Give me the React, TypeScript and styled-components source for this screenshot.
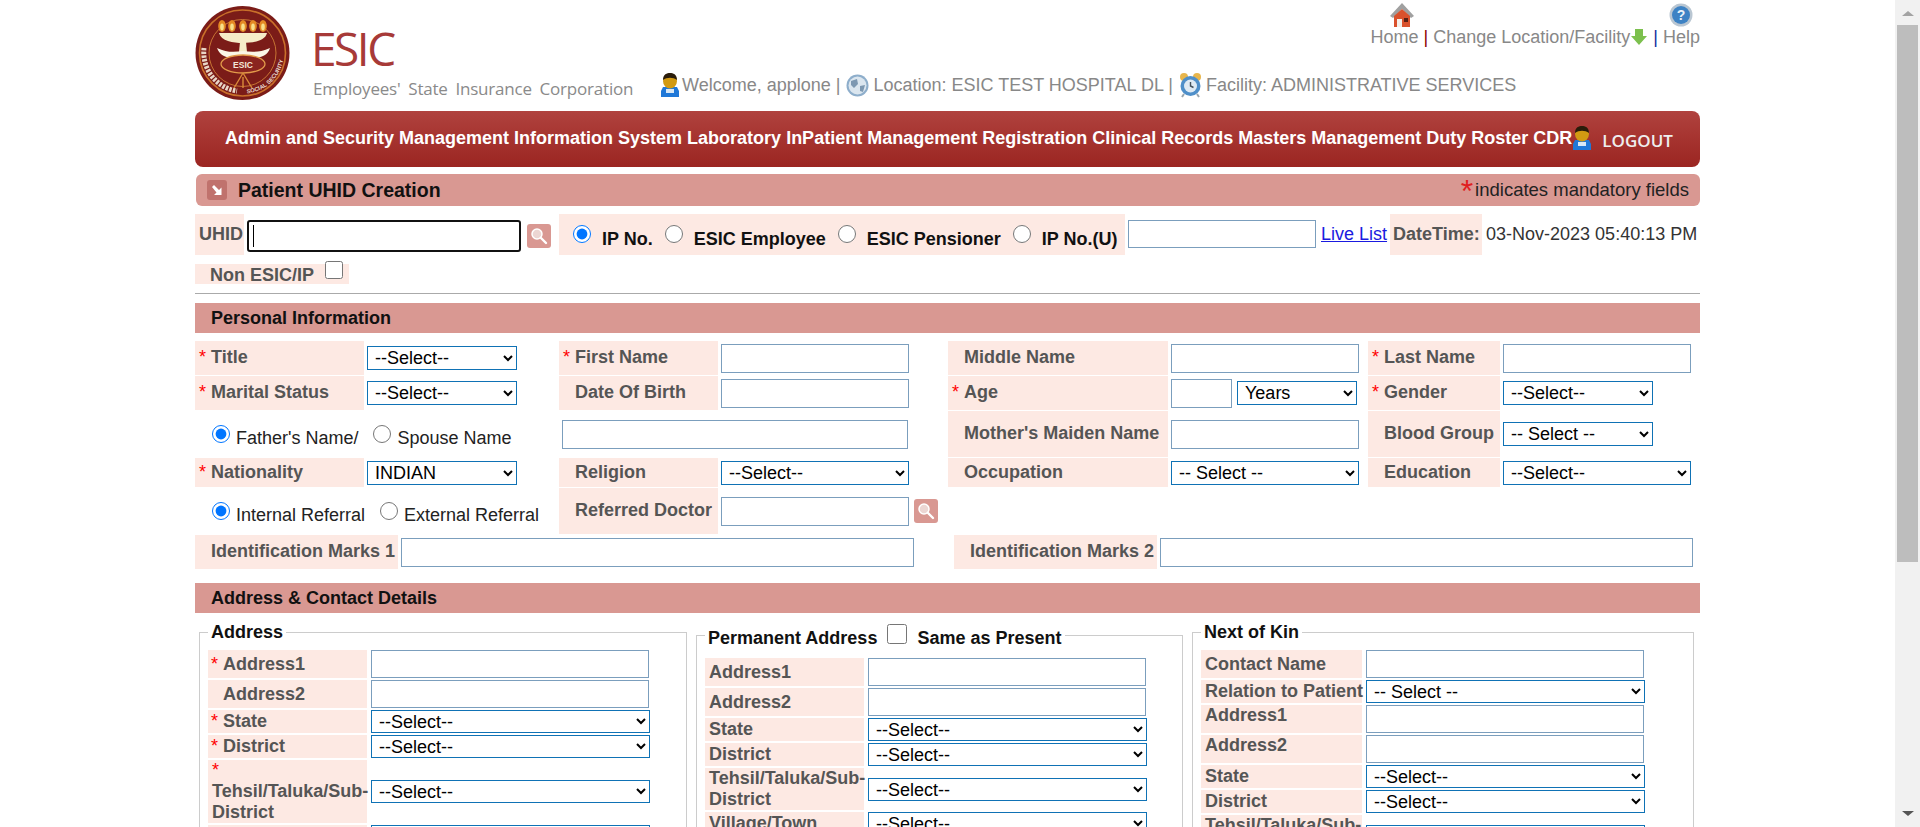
import React, {FC, ReactNode} from 'react';

import styled, {createGlobalStyle} from 'styled-components';

const GlobalStyle = createGlobalStyle`
    html, body {
        margin: 0;
        height: 100%;
        overflow: hidden;
        background: #fff;
    }

    body {
        font-family: "Liberation Sans", Arial, sans-serif;
        font-size: 18px;
    }
`;

const LogoIcon = () => (
    <svg width='95' height='94' viewBox='0 0 95 94'>
        <defs>
            <path id='logoSeal' d='M 50 87.5 A 40.5 40.5 0 0 0 85 30'/>
        </defs>
        <circle cx='47.5' cy='47' r='47' fill='#7b1c18'/>
        <circle cx='47.5' cy='47' r='43' fill='none' stroke='#c9702a' strokeWidth='1.6'/>
        <circle cx='47.5' cy='47' r='33.5' fill='none' stroke='#d98a3a' strokeWidth='0.8'/>
        <path d='M 9 42 A 39 39 0 0 0 42 85' fill='none' stroke='#e8d6c6' strokeWidth='5' strokeDasharray='2.5 1.2'/>
        <text fontFamily='Liberation Sans' fontSize='5.8' fontWeight='700' fill='#eadbcf'>
            <textPath href='#logoSeal' startOffset='2'>{'SOCIAL SECURITY'}</textPath>
        </text>
        {[27, 37, 48, 58, 68].map((x) => (
            <g key={x}>
                <ellipse cx={x} cy='20' rx='3.8' ry='6' fill='#e58a24'/>
                <ellipse cx={x} cy='21' rx='1.8' ry='3.4' fill='#f8e08a'/>
            </g>
        ))}
        <path d='M 24 27 H 72 C 70 35 58 37 48 37 C 38 37 26 35 24 27 Z' fill='#f5ecc8'/>
        <path d='M 45 36 H 51 L 52 46 H 44 Z' fill='#f5ecc8'/>
        <path d='M 22 42 C 32 47 40 46 48 45 C 56 46 64 47 75 42 C 72 52 60 54 48 50 C 36 54 26 52 22 42 Z' fill='#fbf6e6'/>
        <ellipse cx='48' cy='58' rx='22' ry='9' fill='#8a241f' stroke='#e29a4a' strokeWidth='1.3'/>
        <text x='48' y='62' textAnchor='middle' fontFamily='Liberation Sans' fontSize='8.5' fontWeight='700' fill='#f3e6d6'>{'ESIC'}</text>
        <path d='M 48 67 L 39 82 M 48 67 L 57 82 M 48 71 V 82' stroke='#d98a3a' strokeWidth='1.4' fill='none'/>
    </svg>
);

const HomeIcon = () => (
    <svg width='24' height='24' viewBox='0 0 24 24'>
        <path d='M 12 0 L 24 13 L 21 15 L 12 6 L 3 15 L 0 13 Z' fill='#a0a0a0'/>
        <path d='M 4 13 L 12 6 L 20 13 V 24 H 4 Z' fill='#d9512c'/>
        <rect x='7' y='16' width='5' height='8' fill='#f4f0ea'/>
        <rect x='14' y='15' width='4' height='4' fill='#552015'/>
    </svg>
);

const HelpIcon = () => (
    <svg width='24' height='24' viewBox='0 0 24 24'>
        <circle cx='12' cy='12' r='11.5' fill='#b9c6d2'/>
        <circle cx='12' cy='12' r='9' fill='#3d82c4'/>
        <text x='12' y='17' textAnchor='middle' fontFamily='Liberation Sans' fontSize='14' fontWeight='700' fill='#e8f2fa'>{'?'}</text>
    </svg>
);

const GreenArrowIcon = () => (
    <svg width='18' height='18' viewBox='0 0 18 18'>
        <path d='M 5 1 H 13 V 8 H 17 L 9 17 L 1 8 H 5 Z' fill='#7cc04e'/>
    </svg>
);

const PersonIcon = () => (
    <svg width='20' height='24' viewBox='0 0 20 24'>
        <path d='M 3 14 H 17 L 19 18 V 24 H 1 V 18 Z' fill='#1f78d8'/>
        <rect x='6' y='16' width='8' height='4' fill='#d8e8f6'/>
        <ellipse cx='10' cy='8' rx='7' ry='7.5' fill='#d29a12'/>
        <path d='M 3 7 C 3 1 7 0 10 0 C 13 0 17 1 17 7 C 13 4 7 4 3 7 Z' fill='#2a1c0a'/>
    </svg>
);

const GlobeIcon = () => (
    <svg width='23' height='23' viewBox='0 0 23 23'>
        <circle cx='11.5' cy='11.5' r='11' fill='#8eaecb'/>
        <circle cx='11.5' cy='11.5' r='9' fill='#dbe6ef'/>
        <path d='M 5 7 L 11 5 L 12 10 L 8 14 L 5 11 Z M 14 12 L 19 11 L 17 18 L 14 17 Z' fill='#7d98b1'/>
    </svg>
);

const ClockIcon = () => (
    <svg width='23' height='26' viewBox='0 0 23 26'>
        <circle cx='5' cy='5' r='4' fill='#e8b64c'/>
        <circle cx='18' cy='5' r='4' fill='#e8b64c'/>
        <path d='M 5 22 L 3 25 M 18 22 L 20 25' stroke='#9aa5ad' strokeWidth='2'/>
        <circle cx='11.5' cy='14' r='10' fill='#4f8fc9'/>
        <circle cx='11.5' cy='14' r='6.5' fill='#dfeaf3'/>
        <path d='M 11.5 10 V 14 L 14.5 15.5' stroke='#46525c' strokeWidth='1.4' fill='none'/>
    </svg>
);

const SearchIcon = () => (
    <svg width='18' height='18' viewBox='0 0 18 18'>
        <circle cx='7' cy='7' r='5' fill='#ecd6d3' stroke='#fff' strokeWidth='1.5'/>
        <path d='M 11 11 L 16 16' stroke='#fff' strokeWidth='2.4' strokeLinecap='round'/>
    </svg>
);

const CornerArrowIcon = () => (
    <svg width='12' height='12' viewBox='0 0 12 12'>
        <path d='M 1 3 L 3 1 L 8 6 L 10.5 3.5 V 11 H 3 L 5.5 8.5 Z' fill='#fff'/>
    </svg>
);

interface FieldProps {
    label: ReactNode;
    required?: boolean;
    children: ReactNode;
    pad?: number;
    top?: boolean;
}

const SideField: FC<FieldProps> = ({label, required, children, pad = 4, top}) => (
    <FieldRow>
        <SideLabel $pad={pad} $top={top}>
            <span>
                {required && <Req>{'*'}</Req>}
                {label}
            </span>
        </SideLabel>
        {children}
    </FieldRow>
);

const SelectField: FC<{text?: string}> = ({text = '--Select--'}) => (
    <SideSelect defaultValue={text}>
        <option>{text}</option>
    </SideSelect>
);

const GridSelect: FC<{text?: string; width: number}> = ({text = '--Select--', width}) => (
    <Select $width={width} defaultValue={text}>
        <option>{text}</option>
    </Select>
);

const tehsilLabel = (
    <>
        {'Tehsil/Taluka/Sub-'}
        <br/>
        {'District'}
    </>
);

const App: FC = () => {
    return (
        <Page>
            <GlobalStyle/>
            <Main>
                <Wrapper>
                    <Header>
                        <LogoBox><LogoIcon/></LogoBox>
                        <Brand>
                            <BrandName>{'ESIC'}</BrandName>
                            <BrandSub>{'Employees\' State Insurance Corporation'}</BrandSub>
                        </Brand>
                        <HeaderInfo>
                            <TopLinks>
                                <LinkStack>
                                    <HomeIconBox><HomeIcon/></HomeIconBox>
                                    <span>{'Home'}</span>
                                </LinkStack>
                                <Sep $color='#8b0000'>{'|'}</Sep>
                                <TopLink>
                                    {'Change Location/Facility'}
                                    <GreenArrowIcon/>
                                </TopLink>
                                <Sep $color='#1030a0'>{'|'}</Sep>
                                <LinkStack $center={true}>
                                    <HelpIcon/>
                                    <span>{'Help'}</span>
                                </LinkStack>
                            </TopLinks>
                            <WelcomeRow>
                                <PersonIcon/>
                                <span>{'Welcome, applone |'}</span>
                                <GlobeIcon/>
                                <span>{'Location: ESIC TEST HOSPITAL DL |'}</span>
                                <ClockIcon/>
                                <span>{'Facility: ADMINISTRATIVE SERVICES'}</span>
                            </WelcomeRow>
                        </HeaderInfo>
                    </Header>

                    <MenuBar>
                        {['Admin and Security Management', 'Information System', 'Laboratory', 'InPatient Management', 'Registration', 'Clinical Records', 'Masters Management', 'Duty Roster', 'CDR'].map((item) => (
                            <MenuItem key={item}>{item}</MenuItem>
                        ))}
                        <PersonIcon/>
                        <Logout>{'LOGOUT'}</Logout>
                    </MenuBar>

                    <TitleBar>
                        <TitleIcon><CornerArrowIcon/></TitleIcon>
                        <Title>{'Patient UHID Creation'}</Title>
                        <Mandatory>
                            <BigStar>{'*'}</BigStar>
                            {'indicates mandatory fields'}
                        </Mandatory>
                    </TitleBar>

                    <UhidRow>
                        <UhidLabel>{'UHID'}</UhidLabel>
                        <UhidBox><Caret/></UhidBox>
                        <SearchButton $top={10}><SearchIcon/></SearchButton>
                        <RadioPanel>
                            <RadioOption><Radio name='idType' defaultChecked={true}/>{'IP No.'}</RadioOption>
                            <RadioOption><Radio name='idType'/>{'ESIC Employee'}</RadioOption>
                            <RadioOption><Radio name='idType'/>{'ESIC Pensioner'}</RadioOption>
                            <RadioOption><Radio name='idType'/>{'IP No.(U)'}</RadioOption>
                        </RadioPanel>
                        <IpInput type='text'/>
                        <LiveList href='#'>{'Live List'}</LiveList>
                        <DateLabel>{'DateTime:'}</DateLabel>
                        <DateValue>{'03-Nov-2023 05:40:13 PM'}</DateValue>
                    </UhidRow>

                    <NonEsic>
                        {'Non ESIC/IP'}
                        <Checkbox type='checkbox'/>
                    </NonEsic>

                    <Divider/>

                    <SectionBar>{'Personal Information'}</SectionBar>

                    <PersonalGrid>
                        <Cell><Req>{'*'}</Req>{'Title'}</Cell>
                        <Control><GridSelect width={150}/></Control>
                        <Cell><Req>{'*'}</Req>{'First Name'}</Cell>
                        <Control><TextInput $width={188}/></Control>
                        <Cell>{'Middle Name'}</Cell>
                        <Control><TextInput $width={188}/></Control>
                        <Cell><Req>{'*'}</Req>{'Last Name'}</Cell>
                        <Control><TextInput $width={188}/></Control>

                        <Cell><Req>{'*'}</Req>{'Marital Status'}</Cell>
                        <Control><GridSelect width={150}/></Control>
                        <Cell>{'Date Of Birth'}</Cell>
                        <Control><TextInput $width={188}/></Control>
                        <Cell><Req>{'*'}</Req>{'Age'}</Cell>
                        <Control>
                            <TextInput $width={61}/>
                            <GridSelect text='Years' width={120}/>
                        </Control>
                        <Cell><Req>{'*'}</Req>{'Gender'}</Cell>
                        <Control><GridSelect width={150}/></Control>

                        <RadioCell>
                            <InlineOption><SmallRadio name='parent' defaultChecked={true}/>{'Father\'s Name/'}</InlineOption>
                            <InlineOption><SmallRadio name='parent'/>{'Spouse Name'}</InlineOption>
                        </RadioCell>
                        <WideControl><TextInput $width={346}/></WideControl>
                        <Cell>{'Mother\'s Maiden Name'}</Cell>
                        <Control><TextInput $width={188}/></Control>
                        <Cell>{'Blood Group'}</Cell>
                        <Control><GridSelect text='-- Select --' width={150}/></Control>

                        <Cell><Req>{'*'}</Req>{'Nationality'}</Cell>
                        <Control><GridSelect text='INDIAN' width={150}/></Control>
                        <Cell>{'Religion'}</Cell>
                        <Control><GridSelect width={188}/></Control>
                        <Cell>{'Occupation'}</Cell>
                        <Control><GridSelect text='-- Select --' width={188}/></Control>
                        <Cell>{'Education'}</Cell>
                        <Control><GridSelect width={188}/></Control>

                        <RadioCell>
                            <InlineOption><SmallRadio name='referral' defaultChecked={true}/>{'Internal Referral'}</InlineOption>
                            <InlineOption><SmallRadio name='referral'/>{'External Referral'}</InlineOption>
                        </RadioCell>
                        <Cell>{'Referred Doctor'}</Cell>
                        <Control>
                            <TextInput $width={188}/>
                            <SearchButton $top={0}><SearchIcon/></SearchButton>
                        </Control>
                    </PersonalGrid>

                    <MarksRow>
                        <Cell>{'Identification Marks 1'}</Cell>
                        <Control><TextInput $width={513}/></Control>
                        <Cell>{'Identification Marks 2'}</Cell>
                        <Control><TextInput $width={533}/></Control>
                    </MarksRow>

                    <ContactSection>{'Address & Contact Details'}</ContactSection>

                    <AddressColumns>
                        <AddressSet $width={488} $rowsTop={8} $labelWidth={159}>
                            <AddressLegend>{'Address'}</AddressLegend>
                            <SideField label='Address1' pad={15} required={true}><SideInput/></SideField>
                            <SideField label='Address2' pad={15}><SideInput/></SideField>
                            <SideField label='State' pad={15} required={true}><SelectField/></SideField>
                            <SideField label='District' pad={15} required={true}><SelectField/></SideField>
                            <FieldRow>
                                <SideLabel $pad={4}>
                                    <span>
                                        <TallStar>{'*'}</TallStar>
                                        {tehsilLabel}
                                    </span>
                                </SideLabel>
                                <SelectField/>
                            </FieldRow>
                            <SideField label='Village/Town' pad={15}><SelectField/></SideField>
                        </AddressSet>

                        <AddressSet $width={487} $rowsTop={10} $labelWidth={159}>
                            <AddressLegend>
                                <LegendRow>
                                    {'Permanent Address'}
                                    <LegendCheck type='checkbox'/>
                                    {'Same as Present'}
                                </LegendRow>
                            </AddressLegend>
                            <SideField label='Address1'><SideInput/></SideField>
                            <SideField label='Address2'><SideInput/></SideField>
                            <SideField label='State'><SelectField/></SideField>
                            <SideField label='District'><SelectField/></SideField>
                            <SideField label={tehsilLabel}><SelectField/></SideField>
                            <SideField label='Village/Town'><SelectField/></SideField>
                        </AddressSet>

                        <AddressSet $width={502} $rowsTop={8} $labelWidth={161}>
                            <AddressLegend>{'Next of Kin'}</AddressLegend>
                            <SideField label='Contact Name'><SideInput/></SideField>
                            <SideField label='Relation to Patient'><SelectField text='-- Select --'/></SideField>
                            <SideField label='Address1' top={true}><SideInput/></SideField>
                            <SideField label='Address2' top={true}><SideInput/></SideField>
                            <SideField label='State'><SelectField/></SideField>
                            <SideField label='District'><SelectField/></SideField>
                            <SideField label={tehsilLabel}><SelectField/></SideField>
                        </AddressSet>
                    </AddressColumns>
                </Wrapper>
            </Main>
            <ScrollTrack>
                <ScrollArrow $up={true}/>
                <ScrollThumb/>
                <ScrollSpacer/>
                <ScrollArrow/>
            </ScrollTrack>
        </Page>
    );
};

const Page = styled.div`
    display: flex;
    width: 100%;
    height: 827px;
    overflow: hidden;
`;

const Main = styled.main`
    flex: 1;
    min-width: 0;
    height: 827px;
    overflow: hidden;
`;

const Wrapper = styled.div`
    width: 1505px;
    margin: 0 auto;
    font-family: "Liberation Sans", Arial, sans-serif;
    font-size: 18px;
    color: #555;
`;

const Header = styled.header`
    display: flex;
    height: 111px;
`;

const LogoBox = styled.div`
    width: 95px;
    height: 94px;
    margin-top: 6px;
`;

const Brand = styled.div`
    display: flex;
    flex-direction: column;
    width: 320px;
    margin-left: 24px;
`;

const BrandName = styled.div`
    height: 58px;
    margin: 21px 0 0 -3px;
    font-family: "Open Sans", sans-serif;
    font-size: 46px;
    line-height: 55px;
    letter-spacing: -2.5px;
    color: #a73a38;
`;

const BrandSub = styled.div`
    margin: -2px 0 0 -1px;
    font-family: "Open Sans", sans-serif;
    font-size: 17px;
    line-height: 24px;
    letter-spacing: -0.2px;
    word-spacing: 3.5px;
    white-space: nowrap;
    color: #8a8a8a;
`;

const HeaderInfo = styled.div`
    display: flex;
    flex: 1;
    flex-direction: column;
    color: #888;
    font-size: 18px;
`;

const TopLinks = styled.div`
    display: flex;
    align-items: flex-end;
    justify-content: flex-end;
    height: 47px;
    line-height: 20px;
`;

const LinkStack = styled.div<{$center?: boolean}>`
    display: flex;
    flex-direction: column;
    align-items: ${(props) => (props.$center ? 'center' : 'flex-start')};
`;

const HomeIconBox = styled.div`
    height: 24px;
    margin-left: 20px;
`;

const TopLink = styled.div`
    display: flex;
    align-items: center;
    height: 20px;
`;

const Sep = styled.span<{$color: string}>`
    margin: 0 5px;
    color: ${(props) => props.$color};
`;

const WelcomeRow = styled.div`
    display: flex;
    align-items: center;
    gap: 2px;
    height: 26px;
    margin: 25px 0 0 26px;
    white-space: nowrap;
    color: #888;

    svg {
        flex: none;
    }

    span + svg {
        margin: 0 2px 0 4px;
    }
`;

const MenuBar = styled.nav`
    display: flex;
    align-items: center;
    gap: 5px;
    height: 56px;
    padding: 0 0 2px 30px;
    box-sizing: border-box;
    border-radius: 8px;
    background: linear-gradient(#b0423e, #9b2521);
    white-space: nowrap;
    color: #fff;

    svg {
        margin-left: -5px;
    }
`;

const MenuItem = styled.span`
    font-size: 18px;
    font-weight: 700;
`;

const Logout = styled.span`
    margin: 5px 0 0 5px;
    font-family: "Open Sans", sans-serif;
    font-size: 17px;
    font-weight: 600;
    color: #eee;
`;

const TitleBar = styled.div`
    display: flex;
    align-items: center;
    height: 32px;
    margin: 7px 0 0 1px;
    padding: 0 11px;
    border-radius: 6px;
    background: #d99892;
`;

const TitleIcon = styled.div`
    display: flex;
    align-items: center;
    justify-content: center;
    width: 20px;
    height: 20px;
    border-radius: 3px;
    background: #c0726d;
`;

const Title = styled.div`
    margin-left: 11px;
    font-size: 19.5px;
    font-weight: 700;
    color: #111;
`;

const Mandatory = styled.div`
    display: flex;
    align-items: center;
    margin-left: auto;
    font-size: 18.5px;
    color: #222;
`;

const BigStar = styled.span`
    align-self: flex-start;
    height: 20px;
    margin: -4px 2px 0 0;
    font-size: 32px;
    line-height: 32px;
    color: #e02020;
`;

const UhidRow = styled.div`
    display: flex;
    height: 41px;
    margin-top: 8px;
    white-space: nowrap;
`;

const UhidLabel = styled.div`
    display: flex;
    align-items: center;
    box-sizing: border-box;
    width: 49px;
    padding: 0 0 1px 4px;
    background: #fde9e3;
    font-weight: 700;
`;

const UhidBox = styled.div`
    display: flex;
    align-items: center;
    box-sizing: border-box;
    width: 274px;
    height: 32px;
    margin: 6px 0 0 3px;
    padding-left: 4px;
    border: 2px solid #111;
    border-radius: 3px;
`;

const Caret = styled.span`
    width: 1px;
    height: 22px;
    background: #000;
`;

const SearchButton = styled.span<{$top: number}>`
    display: flex;
    flex: none;
    align-items: center;
    justify-content: center;
    align-self: ${(props) => (props.$top ? 'flex-start' : 'center')};
    width: 24px;
    height: 24px;
    margin: ${(props) => props.$top}px 0 0 ${(props) => (props.$top ? 6 : 0)}px;
    border-radius: 3px;
    background: #d99892;
`;

const RadioPanel = styled.div`
    display: flex;
    align-items: center;
    gap: 12px;
    box-sizing: border-box;
    width: 566px;
    margin-left: 8px;
    padding-left: 14px;
    background: #fde9e3;
    font-weight: 700;
    color: #111;
`;

const RadioOption = styled.label`
    display: flex;
    align-items: center;
    padding-top: 9px;
`;

const Radio = styled.input.attrs({type: 'radio'})`
    width: 18px;
    height: 18px;
    margin: 0 11px 10px 0;
`;

const IpInput = styled.input`
    box-sizing: border-box;
    width: 188px;
    height: 28px;
    margin: 6px 0 0 3px;
    border: 1px solid #7b9ebd;
`;

const LiveList = styled.a`
    margin: 10px 0 0 5px;
    line-height: 20px;
    color: #1a1ae0;
`;

const DateLabel = styled.div`
    display: flex;
    align-items: center;
    box-sizing: border-box;
    width: 92px;
    margin-left: 3px;
    padding: 0 0 1px 3px;
    background: #fde9e3;
    font-weight: 700;
`;

const DateValue = styled.div`
    margin: 10px 0 0 4px;
    line-height: 20px;
    color: #333;
`;

const NonEsic = styled.div`
    display: flex;
    width: 154px;
    height: 20px;
    margin-top: 9px;
    padding-left: 15px;
    box-sizing: border-box;
    background: #fde9e3;
    font-weight: 700;
    line-height: 22px;
`;

const Checkbox = styled.input`
    width: 18px;
    height: 18px;
    margin: -3px 0 0 11px;
`;

const Divider = styled.div`
    height: 1px;
    margin-top: 9px;
    background: #aaa;
`;

const SectionBar = styled.div`
    height: 30px;
    margin-top: 9px;
    padding-left: 16px;
    background: #d99892;
    font-size: 18px;
    font-weight: 700;
    line-height: 30px;
    color: #111;
`;

const PersonalGrid = styled.div`
    display: grid;
    grid-template-columns: 169px 195px 159px 230px 220px 200px 132px 200px;
    grid-template-rows: 34px 34px 46px 29px 46px;
    row-gap: 1px;
    margin-top: 8px;
    white-space: nowrap;
`;

const Cell = styled.div`
    display: flex;
    align-items: center;
    padding: 0 0 1px 16px;
    background: #fde9e3;
    font-weight: 700;
`;

const Control = styled.div`
    display: flex;
    align-items: center;
    gap: 5px;
    padding-left: 3px;
`;

const WideControl = styled(Control)`
    grid-column: span 2;
`;

const RadioCell = styled.div`
    display: flex;
    grid-column: span 2;
    gap: 15px;
    align-items: center;
    padding-left: 17px;
    color: #222;
`;

const InlineOption = styled.label`
    display: flex;
    align-items: center;
    padding-top: 8px;
`;

const SmallRadio = styled(Radio)`
    margin: 0 6px 8px 0;
`;

const Req = styled.span`
    display: inline-block;
    width: 12px;
    margin-left: -12px;
    font-weight: 400;
    color: #f00;
`;

const TallStar = styled.span`
    display: block;
    height: 21px;
    font-weight: 400;
    color: #f00;
`;

const TextInput = styled.input.attrs({type: 'text'})<{$width: number}>`
    box-sizing: border-box;
    width: ${(props) => props.$width}px;
    height: 29px;
    border: 1px solid #7b9ebd;
    background: #fff;
`;

const Select = styled.select<{$width: number}>`
    box-sizing: border-box;
    width: ${(props) => props.$width}px;
    height: 24px;
    padding: 0 4px 0 3px;
    border: 1px solid #0f72b5;
    border-radius: 0;
    background: #fff;
    font-family: "Liberation Sans", Arial, sans-serif;
    font-size: 18px;
    color: #000;
`;

const MarksRow = styled.div`
    display: grid;
    grid-template-columns: 203px 556px 203px 1fr;
    height: 34px;
    margin-top: 1px;
    white-space: nowrap;
`;

const ContactSection = styled(SectionBar)`
    margin-top: 14px;
`;

const AddressColumns = styled.div`
    display: flex;
    align-items: flex-start;
    gap: 9px;
    margin-top: 9px;
    padding-left: 4px;
`;

const AddressSet = styled.fieldset<{$width: number; $rowsTop: number; $labelWidth: number}>`
    --label-width: ${(props) => props.$labelWidth}px;
    display: flex;
    flex-direction: column;
    gap: 2px;
    box-sizing: border-box;
    width: ${(props) => props.$width}px;
    min-width: 0;
    margin: 0;
    padding: ${(props) => props.$rowsTop}px 0 10px 8px;
    border: 1px solid #ccc;
`;

const AddressLegend = styled.legend`
    margin-left: 0;
    padding: 0 3px;
    font-size: 18px;
    font-weight: 700;
    line-height: 20px;
    color: #111;
`;

const LegendRow = styled.span`
    display: flex;
    align-items: flex-end;
    height: 26px;
    white-space: nowrap;
`;

const LegendCheck = styled.input`
    width: 20px;
    height: 20px;
    margin: 0 10px 4px 10px;
`;

const FieldRow = styled.div`
    display: grid;
    grid-template-columns: var(--label-width) 278px;
    column-gap: 4px;
`;

const SideLabel = styled.div<{$pad: number; $top?: boolean}>`
    display: flex;
    align-items: ${(props) => (props.$top ? 'flex-start' : 'center')};
    padding-left: ${(props) => props.$pad}px;
    background: #fde9e3;
    font-weight: 700;
    line-height: 21px;
    white-space: nowrap;
    color: #555;
`;

const SideInput = styled.input.attrs({type: 'text'})`
    box-sizing: border-box;
    width: 278px;
    height: 28px;
    border: 1px solid #7b9ebd;
`;

const SideSelect = styled.select`
    box-sizing: border-box;
    align-self: center;
    width: 279px;
    height: 23px;
    padding: 0 4px 0 3px;
    border: 1px solid #0f72b5;
    border-radius: 0;
    background: #fff;
    font-family: "Liberation Sans", Arial, sans-serif;
    font-size: 18px;
    color: #000;
`;

const ScrollTrack = styled.div`
    display: flex;
    flex: none;
    flex-direction: column;
    align-items: center;
    width: 25px;
    height: 827px;
    background: #f1f1f1;
`;

const ScrollArrow = styled.div<{$up?: boolean}>`
    width: 0;
    height: 0;
    margin: ${(props) => (props.$up ? '11px 0 9px' : '8px 0 11px')};
    border-right: 6px solid transparent;
    border-left: 6px solid transparent;
    border-top: ${(props) => (props.$up ? '0' : '5px solid #555')};
    border-bottom: ${(props) => (props.$up ? '5px solid #a3a3a3' : '0')};
`;

const ScrollThumb = styled.div`
    width: 21px;
    height: 537px;
    background: #bdbdbd;
`;

const ScrollSpacer = styled.div`
    flex: 1;
`;

export default App;
